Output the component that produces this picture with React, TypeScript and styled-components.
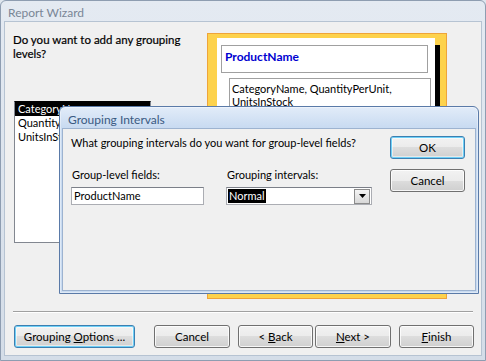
import React from "react";
import styled, { createGlobalStyle, css } from "styled-components";

const Global = createGlobalStyle`
  html, body { margin: 0; padding: 0; background: #dfe6ee; }
  body { font-family: Lato, "Liberation Sans", Arial, sans-serif; font-size: 11px; color: #000; }
  * { box-sizing: border-box; }
`;

const Window = styled.div`
  position: relative;
  width: 486px;
  height: 361px;
  background: linear-gradient(#e4eaf2, #d4dde8);
  border: 1px solid #8e9db1;
  border-radius: 6px 6px 0 0;
  display: flex;
  flex-direction: column;
  overflow: hidden;
`;

const TitleBar = styled.div`
  height: 20px;
  padding: 5px 0 0 7px;
  font-size: 12px;
  color: #7a8696;
  line-height: 14px;
`;

const Client = styled.div`
  margin: 0 3px 0 3px;
  height: 335px;
  background: #f0f0f0;
  border: 1px solid #b6c3d2;
  display: flex;
  flex-direction: column;
`;

const TopRow = styled.div`
  display: flex;
  align-items: flex-start;
  padding: 10px 0 0 8px;
`;

const LeftCol = styled.div`
  width: 194px;
  display: flex;
  flex-direction: column;
`;

const Question = styled.div`
  margin-top: 1px;
  font-size: 11.5px;
  line-height: 13.5px;
  color: #000;
  -webkit-text-stroke: 0.2px #000;
`;

const ListBox = styled.div`
  margin: 41px 0 0 1px;
  width: 137px;
  height: 142px;
  background: #fff;
  border: 1px solid #828790;
  border-top-color: #000;
`;

const ListItem = styled.div<{ $selected?: boolean }>`
  height: 14px;
  line-height: 14px;
  padding-left: 3px;
  white-space: nowrap;
  overflow: hidden;
  ${(p) =>
    p.$selected &&
    css`
      background: #000;
      color: #fff;
    `}
`;

const Preview = styled.div`
  margin-top: 1px;
  width: 240px;
  height: 266px;
  border: 1px solid #eea43a;
  background: #fdd24c;
  padding: 4px 6px 4px 9px;
  display: flex;
`;

const PreviewPaper = styled.div`
  flex: 1;
  background: #fff;
  display: flex;
  flex-direction: column;
  padding: 7px 2px 0 4px;
`;

const PaperShadow = styled.div`
  width: 5px;
  margin-top: 7px;
  background: #000;
`;

const HeaderBox = styled.div`
  width: 207px;
  height: 28px;
  border: 1px solid #a0a0a0;
  color: #0000d0;
  font-weight: 700;
  font-size: 12px;
  padding: 3px 0 0 3px;
`;

const DetailBox = styled.div`
  margin: 5px 0 0 8px;
  width: 202px;
  height: 60px;
  border: 1px solid #a0a0a0;
  padding: 3px 0 0 2px;
  line-height: 13px;
`;

const Separator = styled.div`
  margin: 12px 8px 0 8px;
  height: 2px;
  border-top: 1px solid #a0a0a0;
  border-bottom: 1px solid #fff;
`;

const ButtonRow = styled.div`
  display: flex;
  padding: 12px 0 0 9px;
`;

const Button = styled.button<{ $w: number; $gap?: number; $focus?: boolean }>`
  width: ${(p) => p.$w}px;
  height: 23px;
  margin-left: ${(p) => p.$gap ?? 0}px;
  padding: 0;
  font-family: Lato, "Liberation Sans", Arial, sans-serif;
  font-size: 11.5px;
  color: #000;
  border: 1px solid #707070;
  border-radius: 3px;
  background: linear-gradient(#f2f2f2 0%, #ebebeb 50%, #dddddd 50%, #cfcfcf 100%);
  box-shadow: inset 0 0 0 1px rgba(255, 255, 255, 0.8);
  ${(p) =>
    p.$focus &&
    css`
      border-color: #3c7fb1;
      box-shadow: inset 0 0 0 1px #6fd0f7, inset 0 0 0 2px rgba(255, 255, 255, 0.5);
    `}
  u { text-decoration: underline; }
`;

const Dialog = styled.div`
  position: absolute;
  left: 58px;
  top: 105px;
  width: 420px;
  height: 188px;
  border: 1px solid #5a7aa8;
  border-radius: 6px 6px 0 0;
  background: linear-gradient(#e2ecf9, #c9dbf1 20px, #c9dbf1);
  padding: 0 2px 2px 2px;
  display: flex;
  flex-direction: column;
  box-shadow: 0 0 0 1px rgba(255, 255, 255, 0.4) inset;
`;

const DialogTitle = styled.div`
  height: 21px;
  padding: 6px 0 0 6px;
  font-size: 12px;
  line-height: 14px;
  color: #3b5a82;
`;

const DialogBody = styled.div`
  flex: 1;
  background: #f0f0f0;
  border: 1px solid #9db3d0;
  display: flex;
  padding: 6px 10px 0 8px;
`;

const DialogMain = styled.div`
  flex: 1;
  display: flex;
  flex-direction: column;
`;

const DialogText = styled.div`
  line-height: 14px;
  margin-top: 1px;
`;

const FieldsRow = styled.div`
  display: flex;
  gap: 22px;
  margin-top: 18px;
`;

const Field = styled.div<{ $w: number }>`
  width: ${(p) => p.$w}px;
  display: flex;
  flex-direction: column;
`;

const Label = styled.div`
  line-height: 14px;
  margin-bottom: 5px;
  padding-left: 1px;
`;

const TextBox = styled.div`
  height: 18px;
  background: #fff;
  border: 1px solid #abadb3;
  border-top-color: #7b7f88;
  padding: 1px 0 0 2px;
  line-height: 14px;
`;

const Combo = styled.div`
  height: 18px;
  background: #fff;
  border: 1px solid #abadb3;
  border-top-color: #7b7f88;
  display: flex;
  align-items: center;
  padding: 0 1px 0 1px;
`;

const ComboValue = styled.div`
  flex: 1;
  display: flex;
  span {
    background: #000;
    color: #fff;
    line-height: 14px;
    padding: 0 1px;
  }
`;

const ComboArrow = styled.div`
  width: 16px;
  height: 15px;
  border: 1px solid #8b8b8b;
  background: linear-gradient(#f4f4f4, #d8d8d8);
  display: flex;
  align-items: center;
  justify-content: center;
`;

const DialogButtons = styled.div`
  width: 75px;
  display: flex;
  flex-direction: column;
  gap: 10px;
  margin-top: 1px;
`;

export default function App() {
  return (
    <>
      <Global />
      <Window>
        <TitleBar>Report Wizard</TitleBar>
        <Client>
          <TopRow>
            <LeftCol>
              <Question>
                Do you want to add any grouping
                <br />
                levels?
              </Question>
              <ListBox>
                <ListItem $selected>CategoryName</ListItem>
                <ListItem>QuantityPerUnit</ListItem>
                <ListItem>UnitsInStock</ListItem>
              </ListBox>
            </LeftCol>
            <Preview>
              <PreviewPaper>
                <HeaderBox>ProductName</HeaderBox>
                <DetailBox>
                  CategoryName, QuantityPerUnit,
                  <br />
                  UnitsInStock
                </DetailBox>
              </PreviewPaper>
              <PaperShadow />
            </Preview>
          </TopRow>
          <Separator />
          <ButtonRow>
            <Button $w={121} $focus>
              Grouping <u>O</u>ptions ...
            </Button>
            <Button $w={76} $gap={19}>Cancel</Button>
            <Button $w={75} $gap={8}>
              &lt; <u>B</u>ack
            </Button>
            <Button $w={76} $gap={2}>
              <u>N</u>ext &gt;
            </Button>
            <Button $w={75} $gap={8}>
              <u>F</u>inish
            </Button>
          </ButtonRow>
        </Client>
        <Dialog>
          <DialogTitle>Grouping Intervals</DialogTitle>
          <DialogBody>
            <DialogMain>
              <DialogText>
                What grouping intervals do you want for group-level fields?
              </DialogText>
              <FieldsRow>
                <Field $w={133}>
                  <Label>Group-level fields:</Label>
                  <TextBox>ProductName</TextBox>
                </Field>
                <Field $w={146}>
                  <Label>Grouping intervals:</Label>
                  <Combo>
                    <ComboValue>
                      <span>Normal</span>
                    </ComboValue>
                    <ComboArrow>
                      <svg width="7" height="4" viewBox="0 0 7 4">
                        <path d="M0 0h7L3.5 4z" fill="#000" />
                      </svg>
                    </ComboArrow>
                  </Combo>
                </Field>
              </FieldsRow>
            </DialogMain>
            <DialogButtons>
              <Button $w={75} $focus>OK</Button>
              <Button $w={75}>Cancel</Button>
            </DialogButtons>
          </DialogBody>
        </Dialog>
      </Window>
    </>
  );
}
